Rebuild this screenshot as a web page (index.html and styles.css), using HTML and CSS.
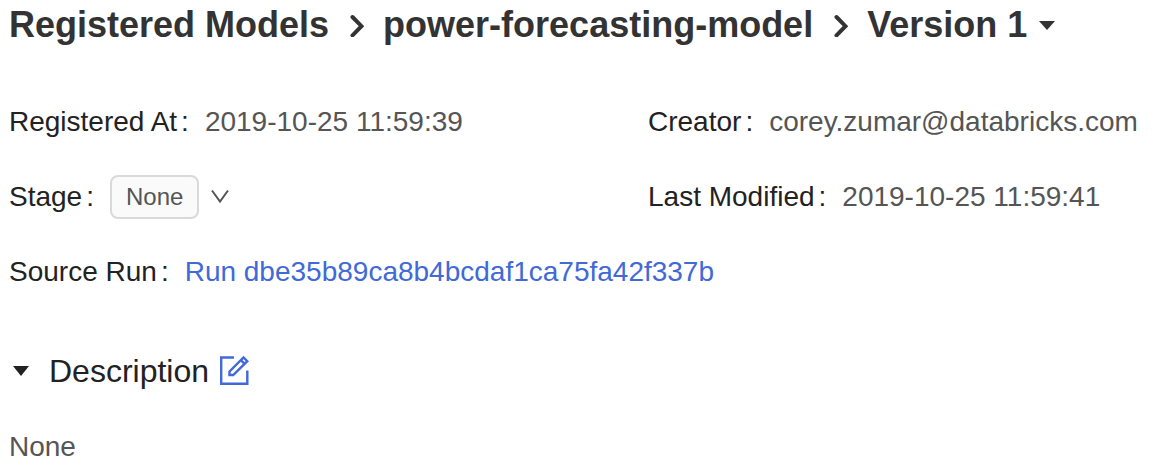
FILE: index.html
```html
<!DOCTYPE html>
<html lang="en">
<head>
<meta charset="utf-8">
<title>power-forecasting-model – Version 1</title>
<link rel="stylesheet" href="styles.css">
</head>
<body>
<main class="page">
  <h1 class="breadcrumb">
    <span>Registered Models</span>
    <svg class="chevron" viewBox="0 0 16 24" aria-hidden="true"><path d="M4.5 4 13.5 13.2 4.5 22.4"/></svg>
    <span>power-forecasting-model</span>
    <svg class="chevron" viewBox="0 0 16 24" aria-hidden="true"><path d="M4.5 4 13.5 13.2 4.5 22.4"/></svg>
    <button class="version" type="button">Version 1 <svg class="caret" viewBox="0 0 16 10" aria-hidden="true"><path d="M0 1H16L8 10Z"/></svg></button>
  </h1>
  <dl class="details">
    <div class="item"><dt>Registered At</dt><dd>2019-10-25 11:59:39</dd></div>
    <div class="item"><dt>Creator</dt><dd>corey.zumar@databricks.com</dd></div>
    <div class="item"><dt>Stage</dt><dd><button class="stage-button" type="button"><span class="tag">None</span><svg class="down" viewBox="0 0 18 16" aria-hidden="true"><path d="M1 1.5 9 12.5 17 1.5"/></svg></button></dd></div>
    <div class="item"><dt>Last Modified</dt><dd>2019-10-25 11:59:41</dd></div>
    <div class="item"><dt>Source Run</dt><dd><a href="#run">Run dbe35b89ca8b4bcdaf1ca75fa42f337b</a></dd></div>
  </dl>
  <section>
    <h2 class="heading">
      <button class="toggle" type="button"><svg class="caret" viewBox="0 0 16 10" aria-hidden="true"><path d="M0 0H16L8 10Z"/></svg>Description</button>
      <button class="edit" type="button" aria-label="Edit description"><svg viewBox="0 0 30 30" aria-hidden="true"><path d="M15 1.5H2.2V27.8H28.3V14.5"/><path d="M10.5 19V15.5L24.5 1.5 28.3 5.2 14.2 19Z"/><path d="M21.8 4.2 25.6 7.9"/></svg></button>
    </h2>
    <p class="note">None</p>
  </section>
</main>
</body>
</html>
```
FILE: styles.css
```css
* { box-sizing: border-box; }
body { margin: 0; background: #fff; color: #222; font-family: "Liberation Sans", Arial, sans-serif; font-size: 28px; line-height: 36px; }
button { padding: 0; border: 0; background: none; color: inherit; font: inherit; cursor: pointer; }
h1, h2, p, dl, dd { margin: 0; }
svg { display: block; fill: none; flex: none; }
.page { padding: 4px 9px 8px; }
.breadcrumb { display: flex; align-items: center; gap: 19px; color: #333; font-size: 36px; line-height: 42px; white-space: nowrap; }
.chevron { width: 16px; height: 24px; stroke: #333; stroke-width: 4px; stroke-linecap: round; }
.caret { width: 16px; height: 10px; fill: currentColor; }
.version { display: flex; align-items: center; gap: 12px; }
.details { display: grid; grid-template-columns: minmax(0, 639fr) minmax(0, 506fr); grid-auto-rows: 44px; row-gap: 31px; margin-top: 54px; }
.item { display: flex; align-items: center; white-space: nowrap; }
.item dt::after { content: ":"; margin: 0 16px 0 4px; }
.item dd { color: #555; }
.item a { color: #4169d8; text-decoration: none; }
.stage-button { display: flex; align-items: center; gap: 12px; }
.tag { padding: 0 14px; border: 2px solid #d9d9d9; border-radius: 8px; background: #fafafa; font-size: 24px; line-height: 40px; }
.down { width: 18px; height: 16px; stroke: #555; stroke-width: 2px; }
.heading { display: flex; align-items: center; gap: 10px; margin-top: 57px; font-size: 32px; font-weight: 400; line-height: 40px; }
.toggle { display: flex; align-items: center; gap: 20px; padding-left: 4px; }
.edit svg { width: 30px; height: 30px; stroke: #4169d8; stroke-width: 2.4; }
.note { margin-top: 38px; color: #555; }
```
